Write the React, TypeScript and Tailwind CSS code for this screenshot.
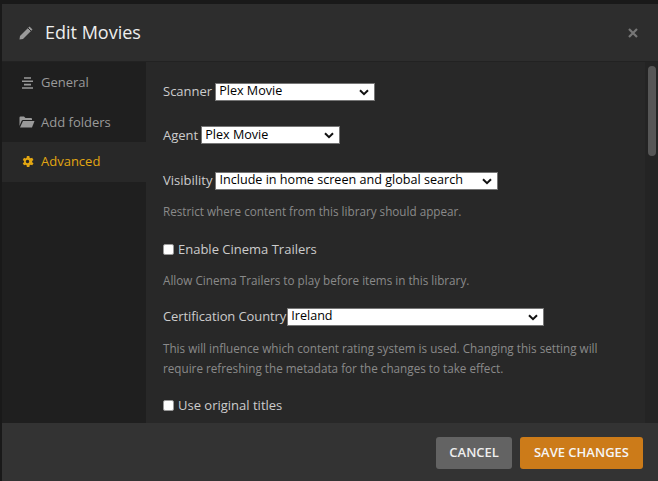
import React from 'react';

function Select({ value, width }: { value: string; width: string }) {
  return (
    <div className={`relative inline-flex h-[18px] items-center border border-[#767676] bg-white pl-[3px] text-[12.6px] leading-none text-black ${width}`}>
      <span>{value}</span>
      <svg className="absolute right-[5px] top-[5px] h-[7px] w-[10px]" viewBox="0 0 10 7">
        <path d="M1 1.2 L5 5.2 L9 1.2" fill="none" stroke="#111" strokeWidth="2" />
      </svg>
    </div>
  );
}

function Checkbox() {
  return <span className="inline-block h-[11px] w-[11px] rounded-[2px] border border-[#999] bg-white" />;
}

function Help({ children }: { children: React.ReactNode }) {
  return <p className="text-[11.7px] leading-[20px] text-[#8a8a8a]">{children}</p>;
}

function NavItem({ label, icon, active }: { label: string; icon: React.ReactNode; active?: boolean }) {
  return (
    <div className={`flex h-[39.5px] items-center gap-[6px] pl-[17px] text-[13px] ${active ? 'bg-[#282828] text-[#e2a612]' : 'text-[#9a9a9a]'}`}>
      <span className="flex w-[16px] justify-center">{icon}</span>
      <span>{label}</span>
    </div>
  );
}

export default function App() {
  return (
    <div className="h-[481px] w-[658px] overflow-hidden bg-[#191919] pl-[2px] pt-[4px]" style={{ fontFamily: '"Open Sans", "Noto Sans", sans-serif' }}>
      <div className="flex h-[477px] flex-col bg-[#282828]">
        {/* header */}
        <div className="flex h-[58px] items-center border-b border-[#222] bg-[#2d2d2d] pl-[16px] pr-[20px]">
          <svg className="h-[16px] w-[16px]" viewBox="0 0 16 16">
            <path d="M11.5 1.5 L14.5 4.5 L5 14 L1.5 14.5 L2 11 Z" fill="#9a9a9a" />
            <path d="M10 3 L13 6" stroke="#2d2d2d" strokeWidth="1" />
          </svg>
          <span className="ml-[11px] text-[18px] text-[#eeeeee]">Edit Movies</span>
          <svg className="ml-auto h-[10px] w-[10px]" viewBox="0 0 10 10">
            <path d="M1 1 L9 9 M9 1 L1 9" stroke="#777" strokeWidth="2.2" />
          </svg>
        </div>

        {/* body */}
        <div className="flex min-h-0 flex-1">
          <div className="w-[144px] bg-[#1f1f1f] pt-[1px]">
            <NavItem
              label="General"
              icon={
                <svg className="h-[12px] w-[13px]" viewBox="0 0 13 12">
                  <path d="M3 1 H10 M1 4.3 H12 M3 7.6 H10 M1 11 H12" stroke="#9a9a9a" strokeWidth="1.6" />
                </svg>
              }
            />
            <NavItem
              label="Add folders"
              icon={
                <svg className="h-[12px] w-[16px]" viewBox="0 0 16 12">
                  <path d="M0.5 1.5 Q0.5 0.5 1.5 0.5 H5 L6.5 2 H12 Q13 2 13 3 V4 H4 Q3 4 2.5 5 L0.5 10 Z" fill="#9a9a9a" />
                  <path d="M4 5 H15.5 L13 11.5 H1 Z" fill="#9a9a9a" />
                </svg>
              }
            />
            <NavItem
              active
              label="Advanced"
              icon={
                <svg className="h-[15px] w-[15px]" viewBox="0 0 24 24">
                  <path
                    fill="#e2a612"
                    d="M19.4 13a7.5 7.5 0 0 0 0-2l2.1-1.6-2-3.5-2.5 1a7.4 7.4 0 0 0-1.7-1L15 3.2h-4L10.6 6a7.4 7.4 0 0 0-1.7 1l-2.5-1-2 3.5L6.5 11a7.5 7.5 0 0 0 0 2l-2.1 1.6 2 3.5 2.5-1a7.4 7.4 0 0 0 1.7 1l.4 2.7h4l.4-2.7a7.4 7.4 0 0 0 1.7-1l2.5 1 2-3.5zM12 14.8a2.8 2.8 0 1 1 0-5.6 2.8 2.8 0 0 1 0 5.6z"
                  />
                </svg>
              }
            />
          </div>

          <div className="relative flex-1 overflow-hidden pl-[17px] pt-[20px] text-[13px] text-[#cccccc]">
            <div className="flex items-center gap-[3px]">
              <span>Scanner</span>
              <Select value="Plex Movie" width="w-[160px]" />
            </div>
            <div className="mt-[24px] flex items-center gap-[3px]">
              <span>Agent</span>
              <Select value="Plex Movie" width="w-[139px]" />
            </div>
            <div className="mt-[26px] flex items-center gap-[3px]">
              <span>Visibility</span>
              <Select value="Include in home screen and global search" width="w-[283px]" />
            </div>
            <div className="mt-[10px]">
              <Help>Restrict where content from this library should appear.</Help>
            </div>
            <div className="mt-[19px] flex items-center gap-[4px]">
              <Checkbox />
              <span>Enable Cinema Trailers</span>
            </div>
            <div className="mt-[11px]">
              <Help>Allow Cinema Trailers to play before items in this library.</Help>
            </div>
            <div className="mt-[17px] flex items-center gap-[1px]">
              <span className="tracking-[-0.1px]">Certification Country</span>
              <Select value="Ireland" width="w-[257px]" />
            </div>
            <div className="mt-[11px] w-[450px]">
              <Help>
                This will influence which content rating system is used. Changing this setting will require refreshing the metadata for the changes to take effect.
              </Help>
            </div>
            <div className="mt-[18px] flex items-center gap-[4px]">
              <Checkbox />
              <span>Use original titles</span>
            </div>

            {/* scrollbar */}
            <div className="absolute bottom-0 right-0 top-0 w-[13px] bg-[#242424]">
              <div className="mx-auto mt-[4px] h-[90px] w-[8px] rounded-full bg-[#565656]" />
            </div>
          </div>
        </div>

        {/* footer */}
        <div className="flex h-[58px] items-center justify-end gap-[8px] bg-[#333333] pr-[15px] pt-[2px]">
          <button className="h-[32px] rounded-[3px] bg-[#636363] px-[13px] text-[13px] font-semibold text-[#eeeeee]">CANCEL</button>
          <button className="h-[32px] rounded-[3px] bg-[#cc7b19] px-[14px] text-[13px] font-semibold text-[#f5f5f5]">SAVE CHANGES</button>
        </div>
      </div>
    </div>
  );
}
